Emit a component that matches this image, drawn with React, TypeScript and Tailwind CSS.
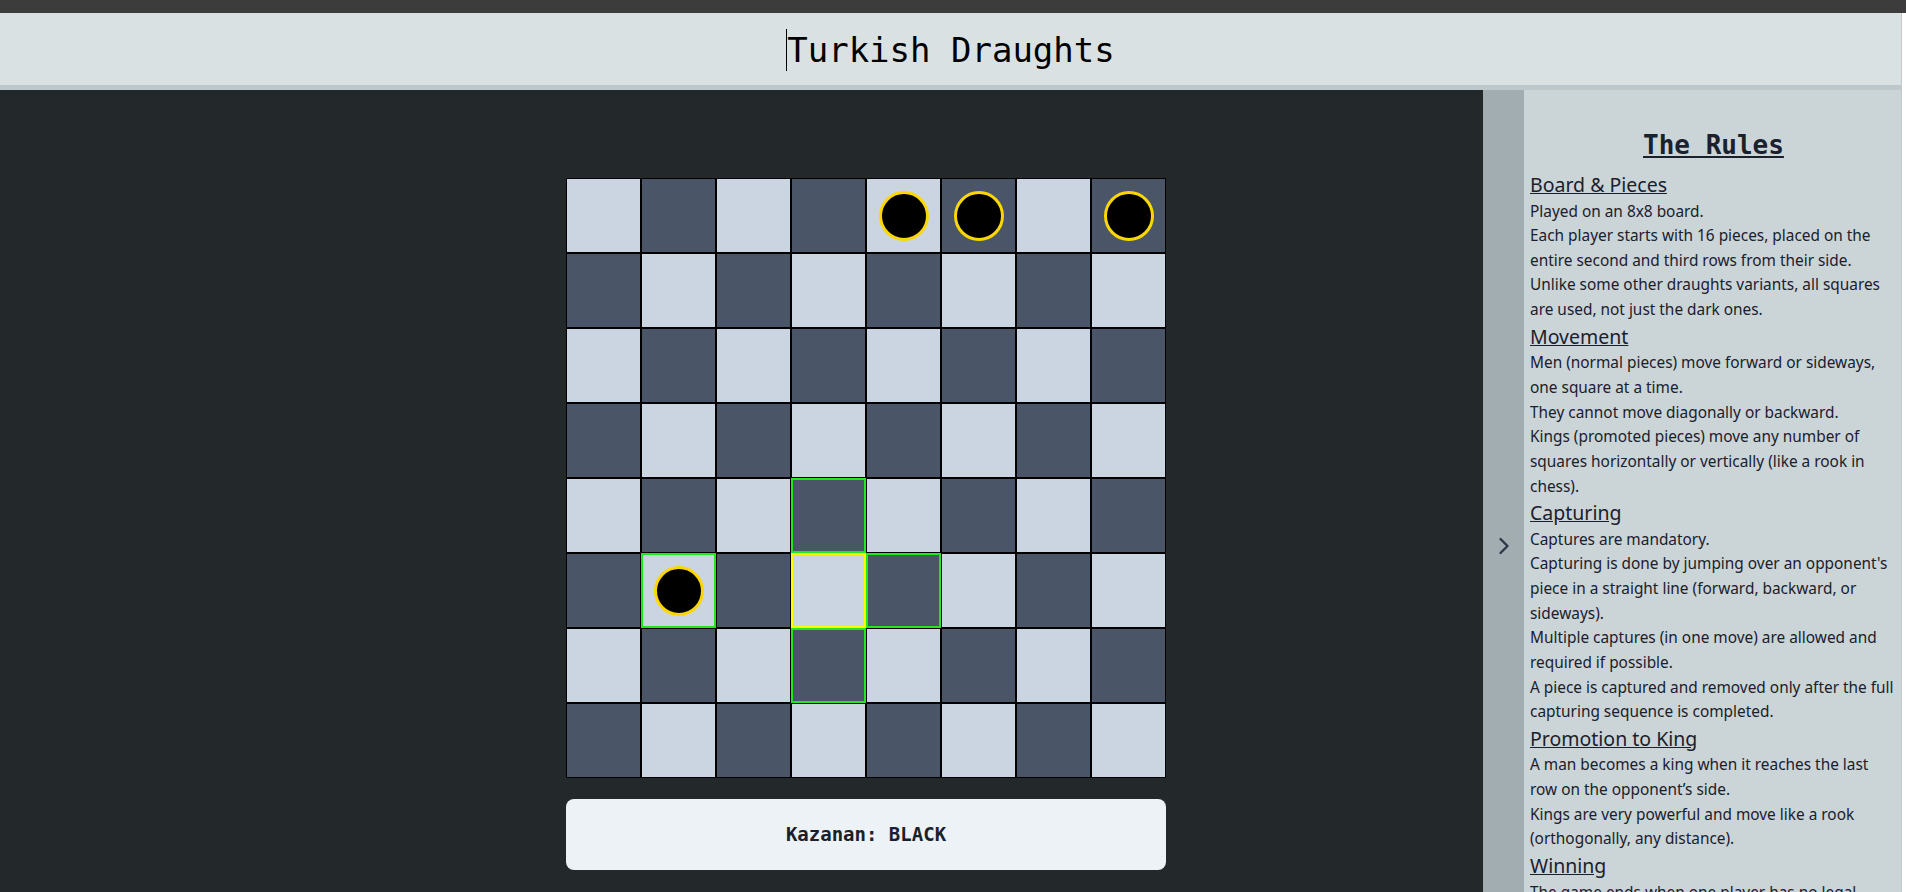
import { ChevronRight } from "lucide-react";

const pieces = ["0-4", "0-5", "0-7", "5-1"];
const greens = ["4-3", "5-1", "5-4", "6-3"];
const yellows = ["5-3"];

const rules = [
    {
        title: "Board & Pieces",
        lines: [
            ["Played on an 8x8 board."],
            ["Each player starts with 16 pieces, placed on the", "entire second and third rows from their side."],
            ["Unlike some other draughts variants, all squares", "are used, not just the dark ones."],
        ],
    },
    {
        title: "Movement",
        lines: [
            ["Men (normal pieces) move forward or sideways,", "one square at a time."],
            ["They cannot move diagonally or backward."],
            ["Kings (promoted pieces) move any number of", "squares horizontally or vertically (like a rook in", "chess)."],
        ],
    },
    {
        title: "Capturing",
        lines: [
            ["Captures are mandatory."],
            ["Capturing is done by jumping over an opponent's", "piece in a straight line (forward, backward, or", "sideways)."],
            ["Multiple captures (in one move) are allowed and", "required if possible."],
            ["A piece is captured and removed only after the full", "capturing sequence is completed."],
        ],
    },
    {
        title: "Promotion to King",
        lines: [
            ["A man becomes a king when it reaches the last", "row on the opponent\u2019s side."],
            ["Kings are very powerful and move like a rook", "(orthogonally, any distance)."],
        ],
    },
    {
        title: "Winning",
        lines: [
            ["The game ends when one player has no legal", "moves left or all their pieces are captured."],
        ],
    },
];

function Board() {
    const cells = [];
    for (let r = 0; r < 8; r++) {
        for (let c = 0; c < 8; c++) {
            const key = `${r}-${c}`;
            const light = (r + c) % 2 === 0;
            let border = "border border-black";
            if (greens.includes(key)) border = "border-2 border-[#1fe81f]";
            if (yellows.includes(key)) border = "border-2 border-[#ffff00]";
            cells.push(
                <div
                    key={key}
                    className={`w-[75px] h-[75px] flex items-center justify-center ${border} ${light ? "bg-[#cbd5e1]" : "bg-[#4a5568]"}`}
                >
                    {pieces.includes(key) && (
                        <div className="w-[50px] h-[50px] rounded-full bg-black border-[3px] border-[#ffd700]" />
                    )}
                </div>
            );
        }
    }
    return <div className="grid grid-cols-8 w-[600px]">{cells}</div>;
}

export default function App() {
    return (
        <div className="h-[892px] w-full overflow-hidden flex flex-col bg-[#23282b]">
            <div className="h-[13px] shrink-0 bg-[#3c3c3c]" />
            <div className="flex flex-1 min-h-0">
                <div className="flex-1 min-w-0 flex flex-col">
                    <header className="h-[77px] shrink-0 bg-[#d9e1e3] border-b-[5px] border-[#bcc8cb] flex items-center justify-center pt-[2px]">
                        <span className="w-px h-[42px] bg-black" />
                        <h1 className="text-[34px] text-black font-['DejaVu_Sans_Mono',monospace] leading-none">
                            Turkish Draughts
                        </h1>
                    </header>
                    <div className="flex flex-1 min-h-0">
                        <main className="flex-1 bg-[#23282b] pl-[566px] pt-[88px]">
                            <Board />
                            <div className="mt-[21px] w-[600px] h-[71px] rounded-lg bg-[#edf2f7] flex items-center justify-center text-[19px] font-bold text-[#1a202c] font-['DejaVu_Sans_Mono',monospace]">
                                Kazanan: BLACK
                            </div>
                        </main>
                        <aside className="w-[418px] flex">
                            <div className="w-[41px] bg-[#a1adb1] flex justify-center pt-[442px] text-[#2d3748]">
                                <ChevronRight size={28} strokeWidth={2} />
                            </div>
                            <div className="w-[377px] bg-[#cbd4d7] pl-[6px] pr-[4px] pt-[36px] text-[#1a202c] font-['Noto_Sans',sans-serif]">
                                <h2 className="text-center text-[26px] leading-[39px] font-bold underline font-['DejaVu_Sans_Mono',monospace] mb-[6px]">
                                    The Rules
                                </h2>
                                {rules.map((s) => (
                                    <section key={s.title}>
                                        <h3 className="text-[19.5px] leading-[28.5px] underline">{s.title}</h3>
                                        {s.lines.map((p, i) => (
                                            <p key={i} className="text-[15.4px] leading-[24.65px] whitespace-nowrap">
                                                {p.map((l, j) => (
                                                    <span key={j} className="block">{l}</span>
                                                ))}
                                            </p>
                                        ))}
                                    </section>
                                ))}
                            </div>
                        </aside>
                    </div>
                </div>
                <div className="w-[5px] bg-white border-l border-[#c8c8c8]" />
            </div>
        </div>
    );
}
